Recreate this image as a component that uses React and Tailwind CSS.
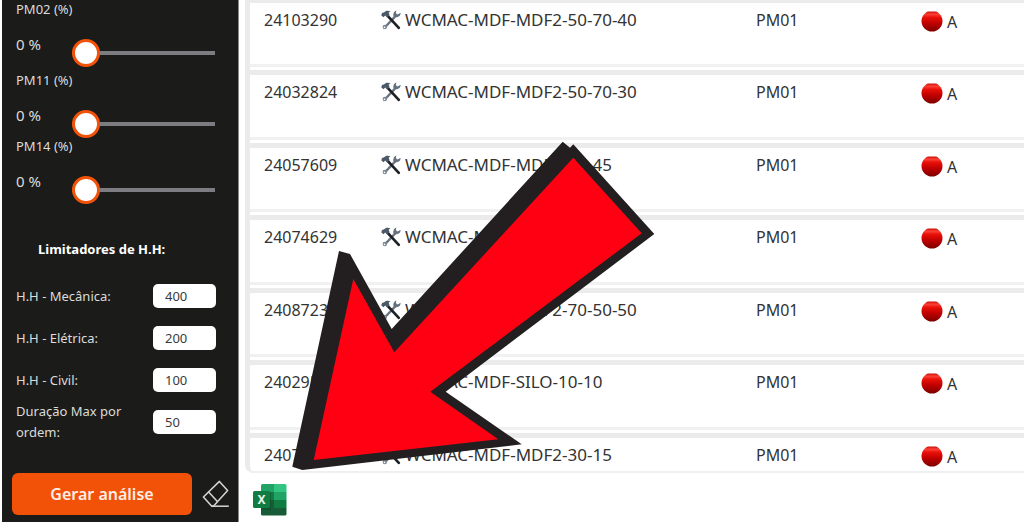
import { useState } from "react";

const ORDERS = [
  { id: "24103290", place: "WCMAC-MDF-MDF2-50-70-40", type: "PM01", priority: "A" },
  { id: "24032824", place: "WCMAC-MDF-MDF2-50-70-30", type: "PM01", priority: "A" },
  { id: "24057609", place: "WCMAC-MDF-MDF2-30-45", type: "PM01", priority: "A" },
  { id: "24074629", place: "WCMAC-MDF-MDF2-50-70", type: "PM01", priority: "A" },
  { id: "24087231", place: "WCMAC-MDF-MDF2-70-50-50", type: "PM01", priority: "A" },
  { id: "24029518", place: "WCMAC-MDF-SILO-10-10", type: "PM01", priority: "A" },
  { id: "24071346", place: "WCMAC-MDF-MDF2-30-15", type: "PM01", priority: "A" },
];

const ToolsIcon = () => (
  <svg width="20" height="20" viewBox="0 0 20 20" className="shrink-0" aria-hidden="true">
    {/* wrench */}
    <path d="M4.2 17 L14 6.6" stroke="#6b7581" strokeWidth="2.4" strokeLinecap="round" />
    <path
      d="M15.4 0.6 L14.8 3 L16.6 4.4 L19.6 2.8 C19.8 5.6 17.6 7.6 15 7.2 L12.4 6.2 C11.8 3.4 13.2 1.2 15.4 0.6 Z"
      fill="#64717f"
    />
    <circle cx="3.8" cy="17" r="2.2" fill="#7c8793" />
    <circle cx="3.5" cy="17.4" r="0.8" fill="#ffffff" />
    {/* hammer */}
    <path d="M6.4 5.6 L17.8 17.8" stroke="#1d2025" strokeWidth="2.7" strokeLinecap="round" />
    <path
      d="M0.2 5.2 L1.2 2.8 L3 2.4 C4.4 0.7 7.2 0.3 9.4 1.5 L7.6 2.8 L8.6 5.2 L6.2 7.4 L4.2 5.6 L2.4 7.2 Z"
      fill="#4b5866"
    />
  </svg>
);

const PriorityDot = () => (
  <svg width="22" height="21" viewBox="0 0 22 21" className="shrink-0" aria-hidden="true">
    <defs>
      <linearGradient id="dot" x1="0" y1="0" x2="0" y2="1">
        <stop offset="0" stopColor="#c80c08" />
        <stop offset="0.14" stopColor="#fb4036" />
        <stop offset="0.3" stopColor="#e81008" />
        <stop offset="0.6" stopColor="#bd0000" />
        <stop offset="1" stopColor="#7c0000" />
      </linearGradient>
    </defs>
    <path
      d="M7 0.4 H15 C18.6 1.6 21.5 5.6 21.5 10 C21.5 16 16.8 20.6 11 20.6 C5.2 20.6 0.5 16 0.5 10 C0.5 5.6 3.4 1.6 7 0.4 Z"
      fill="url(#dot)"
    />
  </svg>
);

const EraserIcon = () => (
  <svg
    width="28"
    height="28"
    viewBox="0 0 28 28"
    fill="none"
    stroke="#d6d6d4"
    strokeWidth="1.5"
    strokeLinejoin="round"
    aria-hidden="true"
  >
    <path d="M17.4 1.4 L25.6 10.4 L11.4 26.2 H9.8 L1.4 17 Z" />
    <path d="M6.4 11.8 L15.4 21.6" />
    <path d="M9.8 26.2 H26.8" />
  </svg>
);

const ExcelIcon = () => (
  <svg width="34" height="32" viewBox="0 0 34 32" aria-hidden="true">
    <clipPath id="sheet">
      <rect x="8" y="0" width="25.5" height="31.5" rx="1.6" />
    </clipPath>
    <g clipPath="url(#sheet)">
      <rect x="8" y="0" width="13" height="8" fill="#21a366" />
      <rect x="21" y="0" width="13" height="8" fill="#33c481" />
      <rect x="8" y="8" width="13" height="8" fill="#107c41" />
      <rect x="21" y="8" width="13" height="8" fill="#21a366" />
      <rect x="8" y="16" width="13" height="8" fill="#185c37" />
      <rect x="21" y="16" width="13" height="8" fill="#107c41" />
      <rect x="8" y="24" width="26" height="8" fill="#185c37" />
    </g>
    <rect x="8" y="8" width="10" height="18" fill="#0c4a28" opacity="0.5" />
    <rect x="0" y="7" width="17" height="17" rx="1.6" fill="#107c41" />
    <text
      x="8.5"
      y="20"
      textAnchor="middle"
      fontFamily="Noto Sans, sans-serif"
      fontSize="12"
      fontWeight="700"
      fill="#e6f2ea"
    >
      X
    </text>
  </svg>
);

const PointerArrow = () => (
  <svg
    width="363"
    height="330"
    viewBox="292 141 363 330"
    className="absolute left-[292px] top-[141px] pointer-events-none"
    aria-hidden="true"
  >
    <path
      d="M562.7 141.7 L570 147.7 L573.3 144.3 L654.3 234 L445.7 391.7 L521.7 444.3 L302.3 470 L292.3 466.7 L339 251 L350 254 L391.7 329 Z"
      fill="#231f20"
    />
    <path
      d="M573.3 157.7 L641.7 233.3 L430.3 391.7 L498.3 439.3 L313.7 460 L353.3 279 L394.3 352.3 Z"
      fill="#ff0013"
    />
  </svg>
);

const PercentSlider = ({ id, label }) => {
  const [value, setValue] = useState(0);

  return (
    <div className="flex flex-col gap-4">
      <label htmlFor={id} className="text-[13px] leading-[18px]">
        {label}
      </label>
      <div className="flex h-8 items-start">
        <output htmlFor={id} className="w-14 text-[15px] leading-5">
          {value} %
        </output>
        <input
          id={id}
          type="range"
          min="0"
          max="100"
          value={value}
          onChange={(e) => setValue(Number(e.target.value))}
          className="mt-[5px] h-7 min-w-0 flex-1 cursor-pointer appearance-none bg-transparent [&::-webkit-slider-runnable-track]:h-1 [&::-webkit-slider-runnable-track]:bg-[#7d7d81] [&::-webkit-slider-thumb]:-mt-3 [&::-webkit-slider-thumb]:h-7 [&::-webkit-slider-thumb]:w-7 [&::-webkit-slider-thumb]:appearance-none [&::-webkit-slider-thumb]:rounded-full [&::-webkit-slider-thumb]:border-3 [&::-webkit-slider-thumb]:border-[#f25207] [&::-webkit-slider-thumb]:bg-white"
        />
      </div>
    </div>
  );
};

const LimitField = ({ id, label, initial }) => {
  const [value, setValue] = useState(initial);

  return (
    <div className="flex h-[42px] items-center justify-between">
      <label htmlFor={id} className="w-28 text-[13px] leading-[21px]">
        {label}
      </label>
      <input
        id={id}
        type="text"
        inputMode="numeric"
        value={value}
        onChange={(e) => setValue(e.target.value)}
        className="h-6 w-[63px] rounded-[5px] bg-white px-3 text-[13px] text-[#3a3a3a]"
      />
    </div>
  );
};

const Sidebar = () => (
  <aside className="flex w-[237px] shrink-0 flex-col border-r border-[#8a8a8a] bg-[#1b1b19] text-[#dcdcda]">
    <div className="flex flex-col pl-3.5 pr-[23px]">
      <div className="pb-[5px]">
        <PercentSlider id="pm02" label="PM02 (%)" />
      </div>
      <PercentSlider id="pm11" label="PM11 (%)" />
      <PercentSlider id="pm14" label="PM14 (%)" />
    </div>
    <h2 className="mt-9 pl-9 text-[13px] font-bold leading-5 text-white">Limitadores de H.H:</h2>
    <div className="mt-4 flex flex-col pl-3.5 pr-[22px]">
      <LimitField id="mecanica" label="H.H - Mecânica:" initial="400" />
      <LimitField id="eletrica" label="H.H - Elétrica:" initial="200" />
      <LimitField id="civil" label="H.H - Civil:" initial="100" />
      <LimitField id="duracao" label="Duração Max por ordem:" initial="50" />
    </div>
    <div className="mt-auto flex items-center gap-2.5 pb-[7px] pl-2.5 pr-2">
      <button
        type="button"
        className="h-[42px] flex-1 cursor-pointer rounded-md bg-[#f25207] text-base font-semibold text-[#ffeee6]"
      >
        Gerar análise
      </button>
      <button type="button" aria-label="Limpar" className="cursor-pointer">
        <EraserIcon />
      </button>
    </div>
  </aside>
);

const OrdersTable = () => (
  <div className="min-h-0 flex-1 overflow-hidden rounded-bl-lg border-b-2 border-l-5 border-b-[#efefef] border-l-[#ebebeb]">
    <table className="-mt-0.5 w-full table-fixed border-separate border-spacing-0 text-base leading-6 text-[#333333]">
      <colgroup>
        <col className="w-[131px]" />
        <col className="w-[375px]" />
        <col className="w-[165px]" />
        <col />
      </colgroup>
      <tbody>
        {ORDERS.map((order) => (
          <tr
            key={order.id}
            className="h-[73px] align-top odd:h-[72px] [&>td]:border-t-5 [&>td]:border-[#ebebeb] [&>td]:pt-[5px] [&>td]:shadow-[inset_0_-3px_0_#ffffff,inset_0_-6px_0_#f1f1f1]"
          >
            <td className="pl-3.5">{order.id}</td>
            <td>
              <div className="flex items-center gap-1 text-[17px]">
                <ToolsIcon />
                {order.place}
              </div>
            </td>
            <td>{order.type}</td>
            <td>
              <div className="flex items-end gap-1 pt-0.5">
                <PriorityDot />
                <span className="-mb-0.5">{order.priority}</span>
              </div>
            </td>
          </tr>
        ))}
      </tbody>
    </table>
  </div>
);

const App = () => {
  return (
    <div className="relative flex h-screen overflow-hidden bg-white pl-0.5 font-['Noto_Sans','Open_Sans',sans-serif]">
      <Sidebar />
      <main className="flex min-w-0 flex-1 flex-col pl-1.5">
        <OrdersTable />
        <div className="flex h-[49px] shrink-0 items-start pl-2 pt-[11px]">
          <button type="button" aria-label="Exportar para Excel" className="cursor-pointer">
            <ExcelIcon />
          </button>
        </div>
      </main>
      <PointerArrow />
    </div>
  );
};

export default App;
